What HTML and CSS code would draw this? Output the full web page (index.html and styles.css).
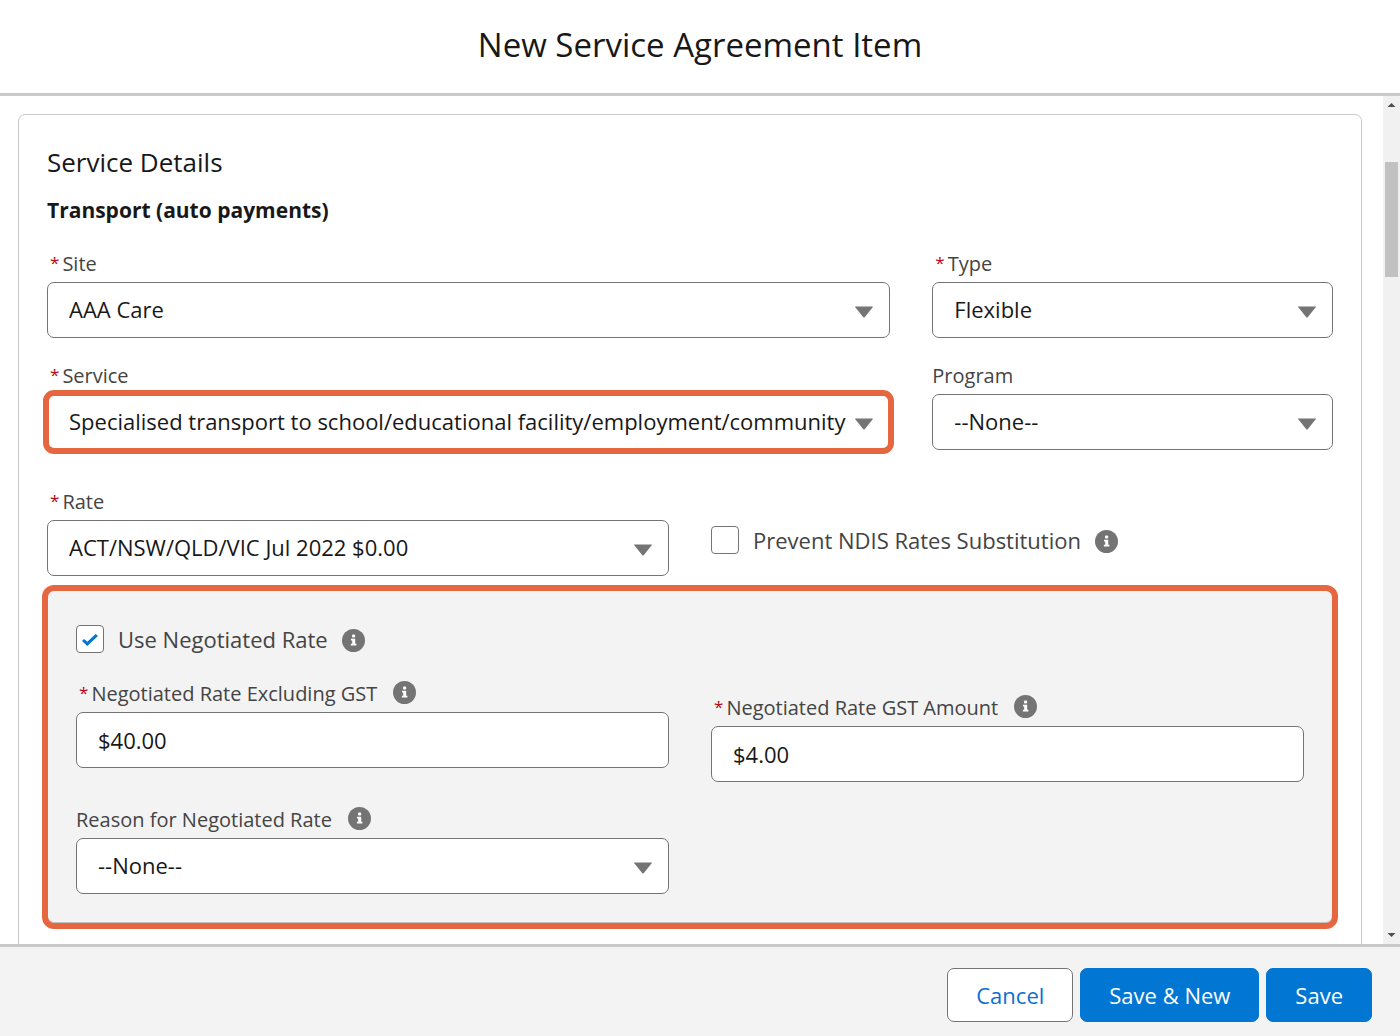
FILE: index.html
```html
<!doctype html>
<html lang="en">

<head>
    <title>New Service Agreement Item</title>
    <meta charset="UTF-8" />
    <meta name="viewport" content="width=device-width, initial-scale=1" />
    <link rel="stylesheet" href="styles.css">
</head>

<body>
    <svg class="defs" aria-hidden="true">
        <symbol id="icon-info" viewBox="0 0 23 23">
            <circle cx="11.5" cy="11.5" r="11.5" fill="#747474" />
            <rect x="10" y="5.6" width="3.2" height="3" rx="1.1" fill="#fff" />
            <path d="M9 9.8h4.2v4.9h1.2v1.7H8.9v-1.7h1.3v-3.2H9z" fill="#fff" />
        </symbol>
        <symbol id="icon-down" viewBox="0 0 18 12">
            <path d="M.6.5h16.8c.5 0 .6.4.3.8l-8 9.9q-.7.7-1.4 0l-8-9.9C0 .9.1.5.6.5z" fill="#747474" />
        </symbol>
    </svg>

    <header class="modal-header">
        <h1>New Service Agreement Item</h1>
    </header>

    <div class="modal-body">
        <main class="content">
            <form class="card" id="item-form">
                <h2>Service Details</h2>
                <h3>Transport (auto payments)</h3>

                <div class="grid">
                    <div class="field wide">
                        <label for="site"><span class="req">*</span>Site</label>
                        <div class="select">
                            <select id="site"><option>AAA Care</option></select>
                            <svg class="arrow"><use href="#icon-down" /></svg>
                        </div>
                    </div>
                    <div class="field narrow">
                        <label for="type"><span class="req">*</span>Type</label>
                        <div class="select">
                            <select id="type"><option>Flexible</option></select>
                            <svg class="arrow"><use href="#icon-down" /></svg>
                        </div>
                    </div>

                    <div class="field wide">
                        <label for="service"><span class="req">*</span>Service</label>
                        <div class="select">
                            <select id="service" class="highlight"><option>Specialised transport to school/educational facility/employment/community</option></select>
                            <svg class="arrow"><use href="#icon-down" /></svg>
                        </div>
                    </div>
                    <div class="field narrow">
                        <label for="program">Program</label>
                        <div class="select">
                            <select id="program"><option>--None--</option></select>
                            <svg class="arrow"><use href="#icon-down" /></svg>
                        </div>
                    </div>

                    <div class="field half lower">
                        <label for="rate"><span class="req">*</span>Rate</label>
                        <div class="select">
                            <select id="rate"><option>ACT/NSW/QLD/VIC Jul 2022 $0.00</option></select>
                            <svg class="arrow"><use href="#icon-down" /></svg>
                        </div>
                    </div>
                    <div class="check half prevent">
                        <input type="checkbox" id="prevent">
                        <label for="prevent">Prevent NDIS Rates Substitution</label>
                        <button type="button" class="info" aria-label="Help"><svg><use href="#icon-info" /></svg></button>
                    </div>
                </div>

                <section class="negotiated">
                    <div class="check">
                        <input type="checkbox" id="negotiated" checked>
                        <label for="negotiated">Use Negotiated Rate</label>
                        <button type="button" class="info" aria-label="Help"><svg><use href="#icon-info" /></svg></button>
                    </div>
                    <div class="grid">
                        <div class="field half">
                            <div class="label-row">
                                <label for="rate-ex"><span class="req">*</span>Negotiated Rate Excluding GST</label>
                                <button type="button" class="info" aria-label="Help"><svg><use href="#icon-info" /></svg></button>
                            </div>
                            <input type="text" id="rate-ex" value="$40.00">
                        </div>
                        <div class="field half lower">
                            <div class="label-row">
                                <label for="rate-gst"><span class="req">*</span>Negotiated Rate GST Amount</label>
                                <button type="button" class="info" aria-label="Help"><svg><use href="#icon-info" /></svg></button>
                            </div>
                            <input type="text" id="rate-gst" value="$4.00">
                        </div>
                        <div class="field half">
                            <div class="label-row">
                                <label for="reason">Reason for Negotiated Rate</label>
                                <button type="button" class="info" aria-label="Help"><svg><use href="#icon-info" /></svg></button>
                            </div>
                            <div class="select">
                                <select id="reason"><option>--None--</option></select>
                                <svg class="arrow"><use href="#icon-down" /></svg>
                            </div>
                        </div>
                    </div>
                </section>
            </form>
        </main>

        <div class="scrollbar" aria-hidden="true">
            <span class="scroll-up"></span>
            <div class="track">
                <div class="thumb"></div>
            </div>
            <span class="scroll-down"></span>
        </div>
    </div>

    <footer class="modal-footer">
        <button type="button" class="btn">Cancel</button>
        <button type="button" class="btn brand">Save &amp; New</button>
        <button type="submit" form="item-form" class="btn brand">Save</button>
    </footer>
</body>

</html>
```

FILE: styles.css
```css
* {
    box-sizing: border-box;
}

body {
    font-family: "Segoe UI", "Open Sans", "Noto Sans", sans-serif;
    font-size: 22px;
    color: #181818;
    background: #fff;
    height: 100vh;
    margin: 0;
    display: flex;
    flex-direction: column;
    overflow: hidden;
}

h1, h2, h3 {
    margin: 0;
    font-weight: 400;
}

button, input, select {
    font: inherit;
    color: inherit;
    margin: 0;
}

.defs {
    display: none;
}

/* header */
.modal-header {
    padding: 21px 28px 24px;
    border-bottom: 3px solid #c9c9c9;
    text-align: center;
}

.modal-header h1 {
    font-size: 33px;
    line-height: 48px;
}

/* body */
.modal-body {
    flex: 1;
    min-height: 0;
    display: flex;
}

.content {
    flex: 1;
    min-width: 0;
    padding: 18px 21px 0 18px;
    overflow: hidden;
}

.card {
    border: 1px solid #c9c9c9;
    border-radius: 7px;
    padding: 28px;
}

.card h2 {
    font-size: 26px;
    line-height: 38px;
}

.card h3 {
    font-size: 21px;
    font-weight: 700;
    line-height: 34px;
    margin: 12px 0 25px;
}

.grid {
    display: grid;
    grid-template-columns: repeat(12, minmax(0, 1fr));
    gap: 26px 42px;
}

.wide {
    grid-column: span 8;
}

.narrow {
    grid-column: span 4;
}

.half {
    grid-column: span 6;
}

.lower {
    margin-top: 14px;
}

/* fields */
.field label {
    display: block;
    font-size: 20px;
    line-height: 24px;
    color: #444;
}

.field > label,
.label-row {
    margin-bottom: 6px;
}

.label-row {
    display: flex;
    align-items: center;
    height: 24px;
    gap: 16px;
}

.req {
    color: #ba0517;
    font-size: 17px;
    line-height: 1;
    vertical-align: 2px;
    margin: 0 3px;
}

.label-row .info {
    margin-bottom: 3px;
}

.select {
    display: grid;
    align-items: center;
}

.select select,
.select .arrow {
    grid-area: 1 / 1;
}

.arrow {
    width: 18px;
    height: 12px;
    justify-self: end;
    margin: 4px 17px 0 0;
    pointer-events: none;
}

select,
input[type="text"] {
    appearance: none;
    display: block;
    width: 100%;
    height: 56px;
    padding: 0 21px;
    border: 1px solid #747474;
    border-radius: 7px;
    background: #fff;
}

select {
    padding-bottom: 2px;
}

.highlight {
    outline: 6px solid #e66640;
    outline-offset: -2px;
}

/* checkboxes */
.check {
    display: flex;
    align-items: center;
    color: #444;
}

.check label {
    line-height: 28px;
    margin: 0 14px;
}

.check .info {
    margin-top: 2px;
}

.prevent {
    align-self: end;
    padding-bottom: 22px;
}

input[type="checkbox"] {
    appearance: none;
    display: grid;
    place-content: center;
    width: 28px;
    height: 28px;
    border: 1px solid #747474;
    border-radius: 4px;
    background: #fff;
}

input[type="checkbox"]:checked::before {
    content: "";
    width: 16px;
    height: 12px;
    margin-top: 2px;
    background: #0176d3;
    clip-path: polygon(0 58%, 13% 42%, 33% 64%, 85% 0, 100% 17%, 33% 100%);
}

.info {
    display: flex;
    padding: 0;
    border: 0;
    background: none;
}

.info svg {
    width: 23px;
    height: 23px;
}

.negotiated {
    margin: 9px -5px 0;
    padding: 34px 28px 29px;
    border: 6px solid #e66640;
    border-radius: 12px;
    background: #f3f3f3;
    box-shadow: inset 0 -1px #c0c0c0;
}

.negotiated .grid {
    margin-top: 29px;
}

/* scrollbar */
.scrollbar {
    width: 17px;
    padding: 7px 0;
    background: #f1f1f1;
    display: flex;
    flex-direction: column;
    align-items: center;
}

.scroll-up,
.scroll-down {
    width: 8px;
    height: 4px;
    background: #505050;
    clip-path: polygon(50% 0, 100% 100%, 0 100%);
}

.scroll-down {
    clip-path: polygon(0 0, 100% 0, 50% 100%);
}

.track {
    flex: 1;
    width: 13px;
    padding: 55px 0;
}

.thumb {
    height: 16%;
    background: #c1c1c1;
}

/* footer */
.modal-footer {
    display: flex;
    justify-content: flex-end;
    gap: 7px;
    padding: 21px 28px 14px;
    border-top: 3px solid #c9c9c9;
    background: #f3f3f3;
}

.btn {
    height: 54px;
    padding: 0 28px;
    border: 1px solid #747474;
    border-radius: 7px;
    background: #fff;
    color: #0b6fd0;
}

.btn.brand {
    background: #0176d3;
    border-color: #0176d3;
    color: #fff;
}
```
